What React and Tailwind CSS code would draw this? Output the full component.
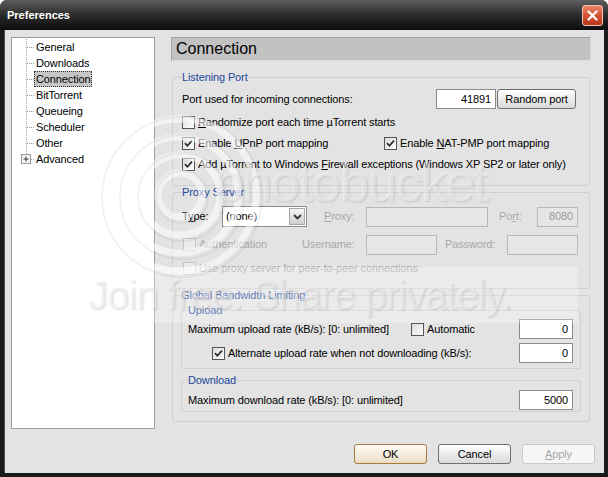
import React from "react";

const treeItems = ["General", "Downloads", "Connection", "BitTorrent", "Queueing", "Scheduler", "Other", "Advanced"];

const Check = ({ checked, disabled }) => (
	<span
		className={`w-[13px] h-[13px] shrink-0 border flex items-center justify-center ${
			disabled ? "border-[#c4c4c4] bg-[#ebebeb]" : "border-[#555] bg-linear-to-br from-[#dadada] to-white"
		}`}
	>
		{checked && (
			<svg width="9" height="9" viewBox="0 0 9 9">
				<path d="M1 4.2 L3.4 6.8 L8 1.6" stroke="#2a2a2a" strokeWidth="1.7" fill="none" />
			</svg>
		)}
	</span>
);

const Box = ({ value, width, disabled }) => (
	<div
		className={`${width} h-[20px] border flex items-center justify-end px-[4px] ${
			disabled ? "border-[#b8b8b8] bg-[#e6e6e6] text-[#9a9a9a]" : "border-[#8c8c8c] bg-white"
		}`}
	>
		{value}
	</div>
);

const Group = ({ title, className = "", children }) => (
	<fieldset className={`border border-[#cfcfcf] rounded-[3px] ${className}`}>
		<legend className="text-[#25479c] leading-[13px] px-0">{title}</legend>
		{children}
	</fieldset>
);

const TreeRow = ({ label, index }) => {
	const last = index === treeItems.length - 1;
	const selected = label === "Connection";
	return (
		<div className="h-[16px] flex items-center">
			<svg width="22" height="16" className="shrink-0">
				{last ? (
					<>
						<line x1="14.5" y1="0" x2="14.5" y2="4" stroke="#a2a2a2" strokeDasharray="1 1" />
						<rect x="9.5" y="3.5" width="9" height="9" fill="#f4f4f4" stroke="#9a9a9a" />
						<line x1="11.5" y1="8" x2="16.5" y2="8" stroke="#333" />
						<line x1="14" y1="5.5" x2="14" y2="10.5" stroke="#333" />
						<line x1="19" y1="8.5" x2="22" y2="8.5" stroke="#a2a2a2" strokeDasharray="1 1" />
					</>
				) : (
					<>
						<line x1="14.5" y1="0" x2="14.5" y2="16" stroke="#a2a2a2" strokeDasharray="1 1" />
						<line x1="15" y1="8.5" x2="22" y2="8.5" stroke="#a2a2a2" strokeDasharray="1 1" />
					</>
				)}
			</svg>
			<span
				className={`px-[1px] leading-[14px] border ${
					selected ? "bg-[#c6c6c6] border-dotted border-[#333]" : "border-transparent"
				}`}
			>
				{label}
			</span>
		</div>
	);
};

const XpButton = ({ children, width, variant = "normal" }) => {
	const styles = {
		normal: "border-[#6f6f6f] bg-linear-to-b from-white to-[#d9d9d9] text-black",
		default: "border-[#a7793f] bg-linear-to-b from-[#fffdf8] to-[#e9dcc4] text-black",
		disabled: "border-[#cacaca] bg-[#f6f6f6] text-[#a6a6a6]",
	};
	return (
		<div className={`${width} h-[20px] rounded-[3px] border flex items-center justify-center ${styles[variant]}`}>
			{children}
		</div>
	);
};

const App = () => {
	return (
		<div className="w-[608px] h-[477px] bg-white relative overflow-hidden font-['Liberation_Sans',Arial,sans-serif] text-[11px] tracking-[-0.12px] text-black">
			<div className="w-[608px] h-[477px] rounded-t-[7px] bg-[#1b1b1b] flex flex-col">
				{/* title bar */}
				<div className="h-[30px] shrink-0 rounded-t-[7px] bg-linear-to-b from-[#5e5e5e] via-[#2c2c2c] to-[#0d0d0d] flex items-center pl-[7px] pr-[5px]">
					<span className="text-white font-bold text-[11px] tracking-normal flex-1">Preferences</span>
					<div className="w-[21px] h-[21px] rounded-[3px] border border-[#f3c1b3] bg-linear-to-b from-[#ea8466] via-[#d65234] to-[#b9341a] flex items-center justify-center">
						<svg width="11" height="11" viewBox="0 0 11 11">
							<path d="M1.5 1.5 L9.5 9.5 M9.5 1.5 L1.5 9.5" stroke="white" strokeWidth="2.2" strokeLinecap="round" />
						</svg>
					</div>
				</div>

				{/* body */}
				<div className="h-[443px] mx-[4px] bg-[#e3e3e3] border-l border-[#4a4a4a] pl-[6px] pt-[7px] flex flex-col">
					<div className="flex gap-[16px] items-start">
						<div className="w-[144px] h-[392px] shrink-0 bg-white border border-[#9d9d9d] pt-[1px]">
							{treeItems.map((t, i) => (
								<TreeRow key={t} label={t} index={i} />
							))}
						</div>

						<div className="w-[420px] flex flex-col">
							<div className="h-[24px] bg-[#c2c2c2] border border-[#a3a3a3] border-b-[#dcdcdc] border-r-[#dcdcdc] flex items-center pl-[4px] text-[16px] tracking-normal">
								Connection
							</div>

							<Group title="Listening Port" className="mx-[1px] mt-[10px] px-[9px] pb-[10px]">
								<div className="mt-[5px] h-[20px] flex items-center pr-[4px]">
									<span className="flex-1">Port used for incoming connections:</span>
									<Box value="41891" width="w-[60px]" />
									<XpButton width="w-[79px] ml-[1px]">Random port</XpButton>
								</div>
								<div className="mt-[3px] h-[21px] flex items-center gap-[3px]">
									<Check />
									<span>
										<span className="underline">R</span>andomize port each time µTorrent starts
									</span>
								</div>
								<div className="h-[21px] flex items-center">
									<div className="w-[202px] flex items-center gap-[3px]">
										<Check checked />
										<span>
											Enable <span className="underline">U</span>PnP port mapping
										</span>
									</div>
									<Check checked />
									<span className="ml-[3px]">
										Enable <span className="underline">N</span>AT-PMP port mapping
									</span>
								</div>
								<div className="h-[21px] flex items-center gap-[3px]">
									<Check checked />
									<span>
										Add µTorrent to Windows <span className="underline">F</span>irewall exceptions (Windows XP SP2 or later only)
									</span>
								</div>
							</Group>

							<Group title="Proxy Server" className="mx-[1px] px-[9px] pb-[10px]">
								<div className="mt-[7px] h-[21px] flex items-center">
									<span className="w-[40px]">
										T<span className="underline">y</span>pe:
									</span>
									<div className="w-[85px] h-[21px] bg-white border border-[#8c8c8c] flex items-center pl-[3px]">
										<span className="flex-1">(none)</span>
										<div className="w-[16px] h-[17px] mr-[1px] border border-[#a9a9a9] bg-linear-to-b from-[#f4f4f4] to-[#cfcfcf] flex items-center justify-center">
											<svg width="9" height="6" viewBox="0 0 9 6">
												<path d="M1 1 L4.5 4.5 L8 1" stroke="#333" strokeWidth="1.8" fill="none" />
											</svg>
										</div>
									</div>
									<span className="w-[42px] ml-[17px] text-[#a8a8a8]">
										<span className="underline">P</span>roxy:
									</span>
									<Box value="" width="w-[122px]" disabled />
									<span className="w-[38px] ml-[11px] text-[#a8a8a8]">
										Po<span className="underline">r</span>t:
									</span>
									<Box value="8080" width="w-[41px]" disabled />
								</div>
								<div className="mt-[7px] h-[21px] flex items-center">
									<div className="w-[120px] flex items-center gap-[3px] pl-[1px]">
										<Check disabled />
										<span className="text-[#a8a8a8]">Authentication</span>
									</div>
									<span className="w-[64px] text-[#a8a8a8]">Username:</span>
									<Box value="" width="w-[71px]" disabled />
									<span className="w-[62px] ml-[8px] text-[#a8a8a8]">Password:</span>
									<Box value="" width="w-[71px]" disabled />
								</div>
								<div className="mt-[3px] h-[20px] flex items-center gap-[3px] pl-[1px]">
									<Check disabled />
									<span className="text-[#a8a8a8]">Use proxy server for peer-to-peer connections</span>
								</div>
							</Group>

							<Group title="Global Bandwidth Limiting" className="mx-[1px] px-[8px] pb-[9px]">
								<Group title="Upload" className="mt-[2px] px-[6px] pb-[5px]">
									<div className="mt-[2px] h-[20px] flex items-center">
										<span className="w-[223px]">Maximum upload rate (kB/s): [0: unlimited]</span>
										<Check />
										<span className="ml-[3px]">Automatic</span>
										<Box value="0" width="w-[54px] ml-auto mr-[1px]" />
									</div>
									<div className="mt-[4px] h-[20px] flex items-center pl-[24px] gap-[3px]">
										<Check checked />
										<span>Alternate upload rate when not downloading (kB/s):</span>
										<Box value="0" width="w-[54px] ml-auto mr-[1px]" />
									</div>
								</Group>
								<Group title="Download" className="mt-[5px] px-[6px] pb-[1px]">
									<div className="mt-[3px] h-[20px] flex items-center">
										<span>Maximum download rate (kB/s): [0: unlimited]</span>
										<Box value="5000" width="w-[54px] ml-auto mr-[1px]" />
									</div>
								</Group>
							</Group>
						</div>
					</div>

					<div className="mt-[15px] flex justify-end gap-[11px] pr-[9px]">
						<XpButton width="w-[73px]" variant="default">OK</XpButton>
						<XpButton width="w-[73px]">Cancel</XpButton>
						<XpButton width="w-[73px]" variant="disabled">
							<span className="underline">A</span>pply
						</XpButton>
					</div>
				</div>
			</div>

			{/* photobucket watermark */}
			<div className="absolute left-[60px] top-[267px] w-[518px] h-[56px] bg-white/30 pointer-events-none" />
			<svg className="absolute left-[85px] top-[95px] pointer-events-none" width="190" height="200" viewBox="0 0 190 200">
				{[22, 40, 58, 76].map((r) => (
					<circle key={r} cx="95" cy="100" r={r} fill="none" stroke="rgba(255,255,255,0.55)" strokeWidth="7" />
				))}
				{[22, 40, 58, 76].map((r) => (
					<circle key={"s" + r} cx="97" cy="102" r={r + 4} fill="none" stroke="rgba(0,0,0,0.05)" strokeWidth="2" />
				))}
			</svg>
			<div className="absolute left-[214px] top-[155px] text-[54px] leading-[54px] tracking-[-2px] text-white/45 [text-shadow:1px_1px_2px_rgba(0,0,0,0.12)] pointer-events-none">
				photobucket
			</div>
			<div className="absolute left-[88px] top-[275px] text-[40px] leading-[40px] tracking-[-1px] text-white/45 [text-shadow:1px_1px_2px_rgba(0,0,0,0.14)] pointer-events-none">
				Join free. Share privately.
			</div>
		</div>
	);
};

export default App;
